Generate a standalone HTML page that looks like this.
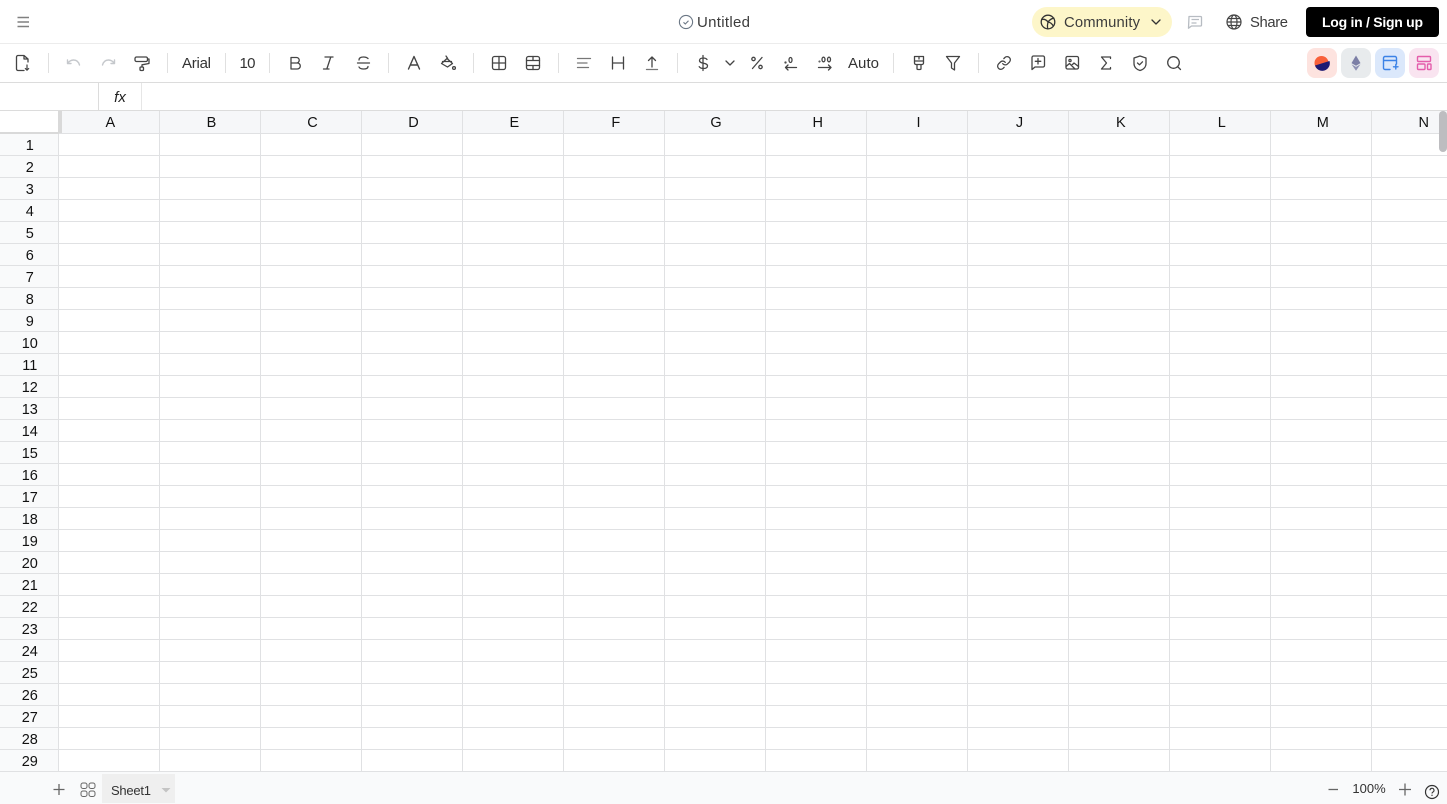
<!DOCTYPE html>
<html>
<head>
<meta charset="utf-8">
<title>Untitled</title>
<style>
html,body{margin:0;padding:0;background:#fff;width:1447px;height:804px;overflow:hidden}
svg{display:block;font-family:"Liberation Sans",Arial,sans-serif}
.i{fill:none;stroke:#444;stroke-width:1.3;stroke-linecap:round;stroke-linejoin:round}
.c{fill:#111;font-size:14.5px;text-anchor:middle}
</style>
</head>
<body>
<svg width="1447" height="804" viewBox="0 0 1447 804" xmlns="http://www.w3.org/2000/svg">
<!-- backgrounds -->
<rect x="0" y="0" width="1447" height="804" fill="#fff"/>
<rect x="59" y="111" width="1388" height="22" fill="#f6f7f9"/>
<rect x="0" y="134" width="58" height="637" fill="#f9fafb"/>
<rect x="0" y="771" width="1447" height="33" fill="#f9fafb"/>

<!-- structural lines -->
<rect x="0" y="43" width="1447" height="1" fill="#ececec"/>
<rect x="0" y="82" width="1447" height="1" fill="#dcdcdc"/>
<rect x="0" y="110" width="1447" height="1" fill="#dcdcdc"/>
<rect x="98" y="83" width="1" height="27" fill="#dcdcdc"/>
<rect x="141" y="83" width="1" height="27" fill="#e6e6e6"/>

<!-- grid -->
<path stroke="#e0e1e3" stroke-width="1" fill="none" d="M58.5 111V771M159.5 111V771M260.5 111V771M361.5 111V771M462.5 111V771M563.5 111V771M664.5 111V771M765.5 111V771M866.5 111V771M967.5 111V771M1068.5 111V771M1169.5 111V771M1270.5 111V771M1371.5 111V771
M0 133.5H1447M0 155.5H1447M0 177.5H1447M0 199.5H1447M0 221.5H1447M0 243.5H1447M0 265.5H1447M0 287.5H1447M0 309.5H1447M0 331.5H1447M0 353.5H1447M0 375.5H1447M0 397.5H1447M0 419.5H1447M0 441.5H1447M0 463.5H1447M0 485.5H1447M0 507.5H1447M0 529.5H1447M0 551.5H1447M0 573.5H1447M0 595.5H1447M0 617.5H1447M0 639.5H1447M0 661.5H1447M0 683.5H1447M0 705.5H1447M0 727.5H1447M0 749.5H1447M0 771.5H1447"/>
<rect x="58" y="111" width="4" height="22" fill="#d9d9d9"/>
<rect x="0" y="132" width="59" height="2" fill="#d9d9d9"/>

<!-- column labels -->
<g class="c">
<text x="110.300" y="127">A</text><text x="211.500" y="127">B</text><text x="312.500" y="127">C</text><text x="413.500" y="127">D</text><text x="514.300" y="127">E</text><text x="615.800" y="127">F</text><text x="716" y="127">G</text><text x="817.800" y="127">H</text><text x="918.500" y="127">I</text><text x="1019.500" y="127">J</text><text x="1120.800" y="127">K</text><text x="1221.800" y="127">L</text><text x="1322.800" y="127">M</text><text x="1423.800" y="127">N</text>
</g>
<!-- row labels -->
<g class="c">
<text x="29.800" y="150">1</text><text x="29.800" y="172">2</text><text x="29.800" y="194">3</text><text x="29.800" y="216">4</text><text x="29.800" y="238">5</text><text x="29.800" y="260">6</text><text x="29.800" y="282">7</text><text x="29.800" y="304">8</text><text x="29.800" y="326">9</text><text x="29.800" y="348">10</text><text x="29.800" y="370">11</text><text x="29.800" y="392">12</text><text x="29.800" y="414">13</text><text x="29.800" y="436">14</text><text x="29.800" y="458">15</text><text x="29.800" y="480">16</text><text x="29.800" y="502">17</text><text x="29.800" y="524">18</text><text x="29.800" y="546">19</text><text x="29.800" y="568">20</text><text x="29.800" y="590">21</text><text x="29.800" y="612">22</text><text x="29.800" y="634">23</text><text x="29.800" y="656">24</text><text x="29.800" y="678">25</text><text x="29.800" y="700">26</text><text x="29.800" y="722">27</text><text x="29.800" y="744">28</text><text x="29.800" y="766">29</text>
</g>

<!-- scrollbar -->
<rect x="1439" y="111" width="8" height="41" rx="4" fill="#bdbdc0"/>

<!-- formula bar fx -->
<text x="120" y="102" text-anchor="middle" font-style="italic" font-size="15" fill="#222">fx</text>

<!-- top bar -->
<path d="M17.500 17.500H29M17.500 22H29M17.500 26.500H29" stroke="#808080" stroke-width="1.600" fill="none"/>
<circle cx="686" cy="22" r="6.600" fill="none" stroke="#6b7785" stroke-width="1.100"/>
<path d="M683.500 22.300l1.800 1.700 3.200-3.300" fill="none" stroke="#6b7785" stroke-width="1.100"/>
<text x="697" y="27" font-size="15" fill="#3c3c3c" textLength="53" lengthAdjust="spacing">Untitled</text>

<rect x="1032" y="7" width="140" height="30" rx="15" fill="#fdf6c9"/>
<g fill="none" stroke="#333" stroke-width="1.300" stroke-linecap="round" stroke-linejoin="round">
<circle cx="1048" cy="22" r="6.800"/>
<path d="M1041.800 19.500c2.500-.6 4.500.2 6.200 2.500 1.500-2 3.500-3.500 5.800-3.800M1048 22c-.6 2.300-.8 4.300-.4 6.700M1048 22c2.300.4 4 1.700 5.300 4"/>
<path d="M1152 20l4 4 4-4"/>
</g>
<text x="1064" y="27" font-size="14.800" fill="#3c3c3c" textLength="76" lengthAdjust="spacing">Community</text>
<path d="M1189 16.500h11.500a1 1 0 0 1 1 1v7.500a1 1 0 0 1-1 1h-9l-3 2.200z M1191.500 19.500h7.500M1191.500 23h5" fill="none" stroke="#b7bcc2" stroke-width="1.300" stroke-linejoin="round"/>
<g fill="none" stroke="#444" stroke-width="1.200">
<circle cx="1234" cy="22" r="7"/>
<ellipse cx="1234" cy="22" rx="3" ry="7"/>
<path d="M1227 22h14M1228 18.500h12M1228 25.500h12"/>
</g>
<text x="1250" y="27" font-size="14.800" fill="#3c3c3c" textLength="38" lengthAdjust="spacing">Share</text>
<rect x="1306" y="7" width="133" height="30" rx="4" fill="#000"/>
<text x="1322" y="27" font-size="14" font-weight="700" fill="#fff" textLength="101" lengthAdjust="spacing">Log in / Sign up</text>

<!-- toolbar separators -->
<path stroke="#e0e0e0" stroke-width="1" d="M48.500 53V73M167.500 53V73M225.500 53V73M269.500 53V73M388.500 53V73M473.500 53V73M558.500 53V73M677.500 53V73M893.500 53V73M978.500 53V73"/>

<!-- toolbar text -->
<text x="182" y="68" font-size="15" fill="#333" textLength="29" lengthAdjust="spacing">Arial</text>
<text x="239.500" y="68" font-size="15" fill="#333" textLength="16" lengthAdjust="spacing">10</text>
<text x="848" y="68" font-size="15" fill="#333" textLength="31" lengthAdjust="spacing">Auto</text>

<!-- toolbar icons -->
<g class="i">
<path d="M28 62V59l-4-3.500h-6a1.500 1.500 0 0 0-1.500 1.500v12a1.500 1.500 0 0 0 1.500 1.500h6M24 55.500V59h4"/>
<path d="M27 65v4.500M25.300 68.500l1.700 1.700 1.700-1.700" stroke-width="1.200"/>
</g>
<g fill="none" stroke="#c5c8cc" stroke-width="1.400" stroke-linecap="round" stroke-linejoin="round">
<path d="M67.500 63.500c1.800-2.500 3.500-3.500 6-3.500 3 0 5 1.500 6 5M67.500 60v3.500H71"/>
<path d="M114.500 63.500c-1.800-2.500-3.500-3.500-6-3.500-3 0-5 1.500-6 5M114.500 60v3.500H111"/>
</g>
<g class="i">
<!-- roller -->
<rect x="135" y="57" width="12.500" height="4.500" rx="1.500"/>
<path d="M147.500 59h1.500v4.500l-7 1.300V67"/>
<rect x="140" y="67" width="3.500" height="3.500" rx="1"/>
<!-- B I S -->
<path d="M291 57.500h5.500a2.700 2.700 0 0 1 0 5.500H291zM291 63h6.300a3 3 0 0 1 0 6H291z"/>
<path d="M325 57h8M323.500 69h5.500M330.800 57l-4 12"/>
<path d="M368 58.500c-1-1-2-1.500-4.500-1.500-3 0-4.500 1.200-4.500 3M357.500 63h12M359 67c.8 1.500 2.500 2 4.500 2 3 0 4.500-1 4.500-2.500"/>
<!-- A -->
<path d="M408.500 69l5.500-12.500 5.500 12.500M410.500 65h7" stroke-width="1.400"/>
<!-- fill -->
<path d="M446 56l1.700 2.500M447 58.500l5.500 5-5 3.500-6-3.500zM442.500 61.500h9" />
<circle cx="454" cy="68" r="1.400"/>
<!-- borders -->
<rect x="492.500" y="56.500" width="13" height="13" rx="2"/>
<path d="M499 56.500v13M492.500 63h13"/>
<!-- merge -->
<rect x="526.500" y="56.500" width="13" height="13" rx="2"/>
<path d="M526.500 60.500h13M526.500 65.500h13M533 56.500v4M533 65.500v4"/>
<!-- align -->
<path d="M577.500 58.500h13M577.500 63h9.500M577.500 67.500h11" stroke="#777"/>
<!-- width -->
<path d="M612.500 57v12M623.500 57v12M612.500 63h11"/>
<!-- up -->
<path d="M652 67V57.500M648.500 60.500l3.500-3.500 3.500 3.500"/>
<path d="M646.500 69.500h11" stroke="#777"/>
<!-- dollar -->
<path d="M707 59.500c-.7-1-2-1.500-3.800-1.500-2.200 0-3.700 1-3.700 2.500 0 3.800 8 1.800 8 5.400 0 1.600-1.600 2.600-4 2.600-2 0-3.500-.6-4.300-1.800M703 55.500v15"/>
<path d="M726 61l4 4 4-4"/>
<!-- percent -->
<path d="M762 57.500l-9.500 11"/>
<circle cx="753.500" cy="59" r="1.700"/>
<circle cx="760.500" cy="67" r="1.700"/>
<!-- decimals -->
<path d="M785.500 67.500h11M785.500 67.500l2.500-2.500M785.500 67.500l2.500 2.500"/>
<circle cx="785.500" cy="62.500" r=".5"/>
<ellipse cx="790.500" cy="60" rx="1.500" ry="2.500"/>
<path d="M818.500 67.500h12.500M831 67.500l-2.500-2.500M831 67.500l-2.500 2.500"/>
<circle cx="819.500" cy="61.500" r=".4"/>
<ellipse cx="823.500" cy="59.500" rx="1.500" ry="2.300"/>
<ellipse cx="829" cy="59.500" rx="1.500" ry="2.300"/>
<!-- brush -->
<path d="M914.500 56.500h9v6.500a1.500 1.500 0 0 1-1.500 1.500h-6a1.500 1.500 0 0 1-1.500-1.500zM914.500 61h9M919 56.500v2.500M917 64.500v4a1 1 0 0 0 1 1h2a1 1 0 0 0 1-1v-4"/>
<!-- filter -->
<path d="M946.500 56.500h13l-5 6.500v7l-3-2v-5z"/>
</g>
<!-- link -->
<g transform="translate(996.300 55.300) scale(.64)" fill="none" stroke="#444" stroke-width="2" stroke-linecap="round" stroke-linejoin="round">
<path d="M10 13a5 5 0 0 0 7.540.54l3-3a5 5 0 0 0-7.070-7.070l-1.720 1.710"/>
<path d="M14 11a5 5 0 0 0-7.540-.54l-3 3a5 5 0 0 0 7.070 7.070l1.710-1.710"/>
</g>
<g class="i">
<!-- comment plus -->
<path d="M1032 57.500a1.500 1.500 0 0 1 1.500-1.500h9.500a1.500 1.500 0 0 1 1.500 1.500v8a1.500 1.500 0 0 1-1.500 1.500h-8l-3 2.500zM1038 58.500v5.500M1035.300 61.300h5.500"/>
<!-- image -->
<rect x="1066" y="56.500" width="12.500" height="12.500" rx="1.500"/>
<circle cx="1070" cy="60.500" r="1.100"/>
<path d="M1066 66.500l3.500-3 5.500 5.500M1071.500 65.500l2.500-2.500 4.500 3.500"/>
<!-- sigma -->
<path d="M1110.500 58.500v-1.500h-9l5 6-5 6h9v-1.500"/>
<!-- shield -->
<path d="M1140 56l6 2v5.500c0 3.500-2.500 6-6 7-3.500-1-6-3.500-6-7V58z"/>
<path d="M1137.500 63l2 1.800 3-3"/>
<!-- search -->
<circle cx="1173.500" cy="62.500" r="5.800"/>
<path d="M1178 67l2.500 2.500"/>
</g>

<!-- right buttons -->
<rect x="1307" y="48" width="30" height="30" rx="8" fill="#fde3df"/>
<rect x="1341" y="48" width="30" height="30" rx="8" fill="#e8ebed"/>
<rect x="1375" y="48" width="30" height="30" rx="8" fill="#dbe8fb"/>
<rect x="1409" y="48" width="30" height="30" rx="8" fill="#f9e4f0"/>
<circle cx="1321.500" cy="63" r="7" fill="#f9603a"/>
<path d="M1315 65.500l14.500-4.500a7 7 0 0 1-14.500 4.500z" fill="#1f1a73"/>
<path d="M1356 55.500l-4.500 7.600 4.500 2.600 4.500-2.600z" fill="#7c7fa6"/>
<path d="M1351.500 64.300l4.500 6.400 4.500-6.400-4.500 2.600z" fill="#8f92b5"/>
<g fill="none" stroke="#3b82e6" stroke-width="1.400" stroke-linejoin="round" stroke-linecap="round">
<path d="M1390 69.500h-5a1.500 1.500 0 0 1-1.500-1.500v-10a1.500 1.500 0 0 1 1.500-1.500h10a1.500 1.500 0 0 1 1.500 1.500v6M1383.500 60.500h13"/>
<path d="M1393.500 66.800h4.500M1395.800 64.500v4.500"/>
</g>
<g fill="none" stroke="#e45dab" stroke-width="1.400" stroke-linejoin="round">
<rect x="1417.500" y="56.500" width="13" height="5" rx="1"/>
<rect x="1417.500" y="64" width="7.500" height="5.500" rx="1"/>
<rect x="1427.500" y="64" width="3.500" height="5.500" rx=".8"/>
</g>

<!-- bottom bar -->
<path d="M59 784v11M53.500 789.500h11" stroke="#666" stroke-width="1.300" fill="none"/>
<g fill="none" stroke="#666" stroke-width="1">
<rect x="81" y="783" width="6" height="5.500" rx="2"/>
<rect x="89" y="783" width="6" height="5.500" rx="2"/>
<rect x="81" y="791" width="6" height="5.500" rx="2"/>
<rect x="89" y="791" width="6" height="5.500" rx="2"/>
</g>
<rect x="102" y="774" width="73" height="29" fill="#efefef"/>
<text x="111" y="795" font-size="13" fill="#333" textLength="40" lengthAdjust="spacing">Sheet1</text>
<path d="M161.500 788h9l-4.500 4.500z" fill="#c4c4c4"/>
<path d="M1328.500 789.500h9.500" stroke="#666" stroke-width="1.300"/>
<text x="1369" y="793" font-size="13" fill="#333" text-anchor="middle">100%</text>
<path d="M1405 783.500v12M1399 789.500h12" stroke="#666" stroke-width="1.300"/>
<circle cx="1432" cy="792" r="6.500" fill="none" stroke="#333" stroke-width="1.200"/>
<path d="M1430 790.300a2 2 0 1 1 3 1.700c-.7.400-1 .8-1 1.500" fill="none" stroke="#333" stroke-width="1.100"/>
<circle cx="1432" cy="795.300" r=".7" fill="#333"/>
</svg>
</body>
</html>
